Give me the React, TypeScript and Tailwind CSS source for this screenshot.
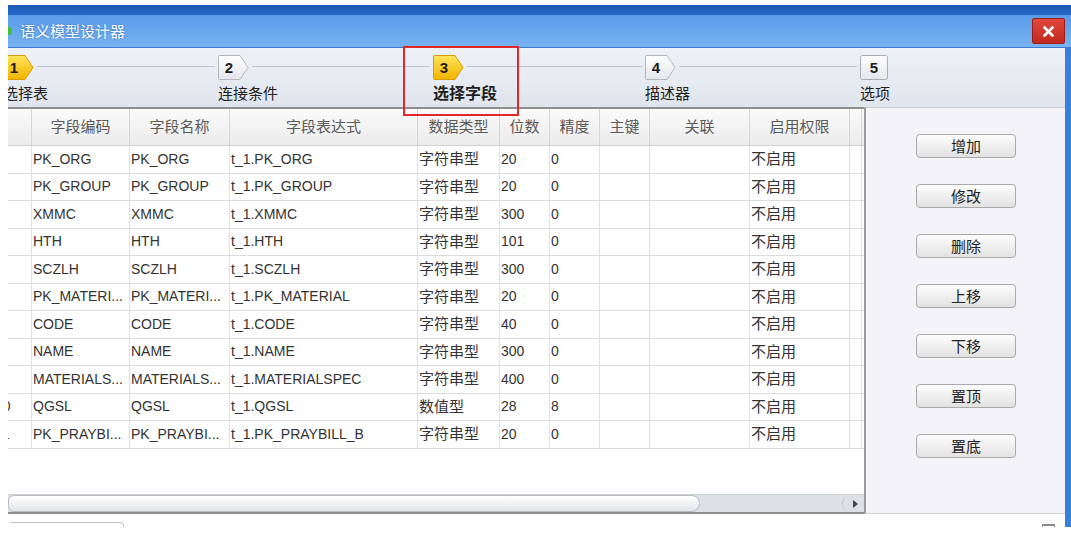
import React from 'react';

const FONT = "font-['Liberation_Sans','Noto_Sans_CJK_SC',sans-serif]";

const colW = ['w-[24px]', 'w-[98px]', 'w-[100px]', 'w-[188px]', 'w-[82px]', 'w-[50px]', 'w-[50px]', 'w-[50px]', 'w-[100px]', 'w-[100px]'];
const headers = ['', '字段编码', '字段名称', '字段表达式', '数据类型', '位数', '精度', '主键', '关联', '启用权限'];

const rows: string[][] = [
  ['PK_ORG', 'PK_ORG', 't_1.PK_ORG', '字符串型', '20', '0'],
  ['PK_GROUP', 'PK_GROUP', 't_1.PK_GROUP', '字符串型', '20', '0'],
  ['XMMC', 'XMMC', 't_1.XMMC', '字符串型', '300', '0'],
  ['HTH', 'HTH', 't_1.HTH', '字符串型', '101', '0'],
  ['SCZLH', 'SCZLH', 't_1.SCZLH', '字符串型', '300', '0'],
  ['PK_MATERI...', 'PK_MATERI...', 't_1.PK_MATERIAL', '字符串型', '20', '0'],
  ['CODE', 'CODE', 't_1.CODE', '字符串型', '40', '0'],
  ['NAME', 'NAME', 't_1.NAME', '字符串型', '300', '0'],
  ['MATERIALS...', 'MATERIALS...', 't_1.MATERIALSPEC', '字符串型', '400', '0'],
  ['QGSL', 'QGSL', 't_1.QGSL', '数值型', '28', '8'],
  ['PK_PRAYBI...', 'PK_PRAYBI...', 't_1.PK_PRAYBILL_B', '字符串型', '20', '0'],
];

const steps = [
  { n: 1, label: '选择表', w: 'w-[215px]', active: true },
  { n: 2, label: '连接条件', w: 'w-[215px]' },
  { n: 3, label: '选择字段', w: 'w-[212px]', active: true, current: true },
  { n: 4, label: '描述器', w: 'w-[215px]' },
  { n: 5, label: '选项', w: 'w-[120px]', last: true },
];

const buttons = ['增加', '修改', '删除', '上移', '下移', '置顶', '置底'];

function StepIcon({ n, active, last }: { n: number; active?: boolean; last?: boolean }) {
  const gid = `g${n}`;
  return (
    <svg width={last ? 29 : 31} height={25} viewBox={last ? '0 0 29 25' : '0 0 31 25'} className="shrink-0">
      <defs>
        <linearGradient id={gid} x1="0" y1="0" x2="0" y2="1">
          {active ? (
            <>
              <stop offset="0" stopColor="#ffe45a" />
              <stop offset="1" stopColor="#f2b300" />
            </>
          ) : (
            <>
              <stop offset="0" stopColor="#ffffff" />
              <stop offset="1" stopColor="#e4e6ea" />
            </>
          )}
        </linearGradient>
      </defs>
      {last ? (
        <rect x="0.5" y="0.5" width="27" height="24" rx="2" fill={`url(#${gid})`} stroke="#a9adb3" />
      ) : (
        <path d="M1.5 0.5 H22 L30 12.5 L22 24.5 H1.5 Q0.5 24.5 0.5 23.5 V1.5 Q0.5 0.5 1.5 0.5 Z"
          fill={`url(#${gid})`} stroke={active ? '#d69c00' : '#b3b7bd'} />
      )}
      <text x={last ? 14 : 11} y="18" textAnchor="middle" fontFamily="Liberation Sans, sans-serif"
        fontSize="15" fontWeight="bold" fill="#1a1a1a">{n}</text>
    </svg>
  );
}

function TitleBar() {
  return (
    <div className="flex flex-col">
      <div className="h-[10px] bg-[linear-gradient(to_bottom,#1b59b8,#2368c8)]" />
      <div className="h-[33px] flex items-center bg-[linear-gradient(to_bottom,#5a9be8,#78b3f1)] border-b border-[#3c7bd0]">
        <div className="w-[4px] h-[8px] bg-[#3fc23a] rounded-r-[3px] mr-[8px]" />
        <span className="text-[15px] text-white leading-none [text-shadow:0_0_2px_rgba(20,60,140,0.6)]">语义模型设计器</span>
        <div className="ml-auto mr-[6px] w-[33px] h-[26px] rounded-[2px] border border-[#9e1c16] bg-[linear-gradient(to_bottom,#e2473c,#bf2a20)] flex items-center justify-center">
          <svg width="11" height="11" viewBox="0 0 11 11">
            <path d="M1.5 1.5 L9.5 9.5 M9.5 1.5 L1.5 9.5" stroke="#fff" strokeWidth="2.6" strokeLinecap="round" />
          </svg>
        </div>
      </div>
    </div>
  );
}

function StepBar() {
  return (
    <div className="h-[59px] overflow-hidden bg-[linear-gradient(to_bottom,#eef1f6,#e0e5ed)]">
      <div className="flex -ml-[5px] pt-[7px]">
        {steps.map(s => (
          <div key={s.n} className={`flex flex-col shrink-0 ${s.w}`}>
            <div className="flex items-center h-[25px]">
              <StepIcon n={s.n} active={s.active} last={s.last} />
              {!s.last && <div className="flex-1 h-px bg-[#c3c8d0] mx-[3px] -mt-[2px]" />}
            </div>
            <div className={`mt-[4px] leading-[20px] text-[#1f1f1f] ${s.current ? 'text-[16px] font-bold' : 'text-[15px]'}`}>
              {s.label}
            </div>
          </div>
        ))}
      </div>
    </div>
  );
}

function DataTable() {
  return (
    <div className="w-[856px] shrink-0 flex flex-col border-t-2 border-b-2 border-[#8d8d8d] bg-white overflow-hidden">
      <div className="flex h-[37px] bg-[linear-gradient(to_bottom,#fbfbfb,#ebebeb)] border-b border-[#d3d3d3]">
        {headers.map((h, i) => (
          <div key={i} className={`${colW[i]} shrink-0 flex items-center justify-center border-r border-[#d6d6d6] text-[15px] text-[#5a5a5a]`}>
            {h}
          </div>
        ))}
        <div className="w-[12px] shrink-0 border-r border-[#d6d6d6]" />
      </div>
      {rows.map((r, ri) => {
        const cells = [...r, '', '', '不启用'];
        return (
          <div key={ri} className="flex h-[27.5px] border-b border-[#dcdcdc]">
            <div className={`${colW[0]} shrink-0 overflow-hidden flex items-center border-r border-[#e2e2e2] text-[14px] text-[#333]`}>
              <span className="-ml-[13px]">{ri + 1}</span>
            </div>
            {cells.map((c, ci) => (
              <div key={ci} className={`${colW[ci + 1]} shrink-0 flex items-center pl-[1px] border-r border-[#e2e2e2] whitespace-nowrap overflow-hidden ${/[\u4e00-\u9fff]/.test(c) ? 'text-[15px]' : 'text-[14px]'} text-[#333]`}>
                {c}
              </div>
            ))}
            <div className="w-[12px] shrink-0 border-r border-[#e2e2e2]" />
          </div>
        );
      })}
      <div className="flex-1" />
      <div className="h-[18px] flex bg-[#dde0e4] border-t border-[#cfd2d6]">
        <div className="w-[692px] h-full rounded-l-[10px] rounded-r-[14px] border border-[#b9bcc0] bg-[linear-gradient(to_bottom,#ffffff,#e3e5e8)]" />
        <div className="flex-1" />
        <div className="w-[22px] h-full flex items-center justify-end pr-[6px] rounded-l-[12px] border-l border-[#c2c5c9]">
          <svg width="5" height="8" viewBox="0 0 5 8"><path d="M0 0 L5 4 L0 8 Z" fill="#444" /></svg>
        </div>
      </div>
    </div>
  );
}

function ButtonPanel() {
  return (
    <div className="flex-1 bg-[#f3f3f8] border-l-2 border-[#9a9a9a] border-t border-b border-t-[#c9cbd0] border-b-[#d0d2d6] flex flex-col gap-[26px] pt-[26px] pl-[50px]">
      {buttons.map(b => (
        <button key={b} className="w-[100px] h-[24px] rounded-[4px] border border-[#a9a9a9] bg-[linear-gradient(to_bottom,#fdfdfd,#e2e2e2)] text-[15px] text-[#222] leading-none flex items-center justify-center">
          {b}
        </button>
      ))}
    </div>
  );
}

export default function App() {
  return (
    <div className={`relative w-[1071px] h-[534px] overflow-hidden bg-white ${FONT}`}>
      <div className="h-[5px]" />
      <div className="ml-[8px] flex flex-col">
        <TitleBar />
        <div className="flex flex-col border-r-[6px] border-[#3a7fd9]">
          <StepBar />
          <div className="flex h-[407px]">
            <DataTable />
            <ButtonPanel />
          </div>
          <div className="h-[13px] bg-white flex items-end">
            <div className="w-[114px] h-[5px] ml-[2px] border-t border-r border-[#c4c4c4] rounded-tr-[4px]" />
            <div className="ml-auto mr-[10px] w-[13px] h-[3px] border-t-2 border-x border-[#8a8a8a]" />
          </div>
        </div>
      </div>
      {/* highlight around the current step */}
      <div className="absolute left-[403px] top-[46px] w-[116px] h-[70px] border-2 border-[#e3262c]" />
    </div>
  );
}
